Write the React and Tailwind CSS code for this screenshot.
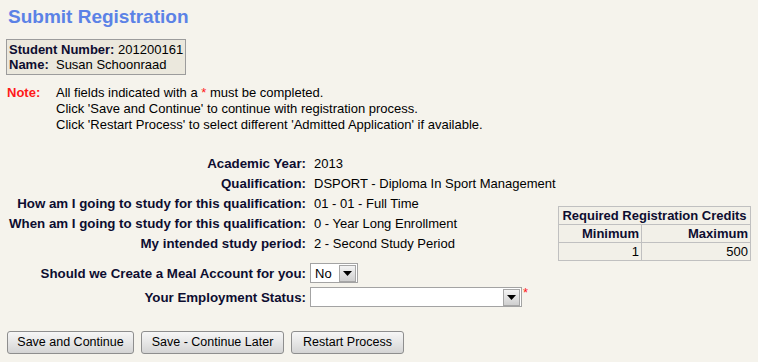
import React from "react";

const Arrow = ({ className = "" }) => (
  <div
    className={`flex items-center justify-center border border-[#a6a6a6] bg-gradient-to-b from-[#f4f4f4] to-[#cfcfcf] ${className}`}
  >
    <svg width="9" height="5" viewBox="0 0 9 5">
      <path d="M0 0h9L4.5 5z" fill="#000" />
    </svg>
  </div>
);

const Row = ({ label, children }) => (
  <div className="flex h-[20px] items-center">
    <div className="w-[306px] shrink-0 text-right text-[13.3px] font-bold text-[#0d0d30] whitespace-nowrap">{label}</div>
    <div className="pl-[8px] text-black whitespace-nowrap">{children}</div>
  </div>
);

const Button = ({ children, width }) => (
  <button
    className={`h-[23px] ${width} rounded-[3px] border border-[#8e8e8e] bg-gradient-to-b from-[#f6f6f6] via-[#e6e6e6] to-[#d4d4d4] text-[12.5px] text-black`}
  >
    {children}
  </button>
);

export default function App() {
  return (
    <div className="min-h-[362px] w-[758px] bg-[#f5f3ec] font-['Liberation_Sans',Arial,sans-serif] text-[13px] leading-[15px] text-[#0d0d30]">
      <div className="px-[8px] pt-[6px]">
        <h1 className="text-[19px] font-bold leading-[22px] text-[#5b82e6]">
          Submit Registration
        </h1>
      </div>

      <div className="ml-[6px] mt-[11px] w-[180px] border border-[#9c9c9c] bg-[#ebe8dd] px-[2px] py-[2px] whitespace-nowrap">
        <div>
          <span className="font-bold">Student Number:</span>{" "}
          <span className="text-black">201200161</span>
        </div>
        <div>
          <span className="font-bold">Name:</span>
          <span className="text-black">&nbsp; Susan Schoonraad</span>
        </div>
      </div>

      <div className="mt-[10px] flex px-[7px] leading-[16px]">
        <div className="w-[49px] shrink-0 font-bold text-[#ff1a1a]">Note:</div>
        <div className="text-black">
          <div>
            All fields indicated with a <span className="text-[#ff1a1a]">*</span> must be
            completed.
          </div>
          <div>Click 'Save and Continue' to continue with registration process.</div>
          <div>
            Click 'Restart Process' to select different 'Admitted Application' if available.
          </div>
        </div>
      </div>

      <div className="mt-[20px] flex">
        <div className="w-[554px] shrink-0">
          <Row label="Academic Year:">2013</Row>
          <Row label="Qualification:">DSPORT - Diploma In Sport Management</Row>
          <Row label="How am I going to study for this qualification:">01 - 01 - Full Time</Row>
          <Row label="When am I going to study for this qualification:">
            0 - Year Long Enrollment
          </Row>
          <Row label="My intended study period:">2 - Second Study Period</Row>

          <div className="mt-[10px] flex h-[20px] items-center">
            <div className="w-[306px] shrink-0 text-right text-[13.3px] font-bold">
              Should we Create a Meal Account for you:
            </div>
            <div className="ml-[4px] flex h-[20px] w-[48px] items-center justify-between border border-[#a3a3a3] bg-white pl-[4px] pr-[1px] text-black">
              <span>No</span>
              <Arrow className="h-[17px] w-[17px]" />
            </div>
          </div>

          <div className="mt-[4px] flex h-[20px] items-center">
            <div className="w-[306px] shrink-0 text-right text-[13.3px] font-bold">Your Employment Status:</div>
            <div className="ml-[4px] flex h-[20px] w-[212px] items-center justify-end border border-[#a3a3a3] bg-white pr-[1px]">
              <Arrow className="h-[17px] w-[17px]" />
            </div>
            <span className="ml-[1px] self-start text-[#ff1a1a] leading-[12px]">*</span>
          </div>
        </div>

        <div className="ml-[4px] mt-[53px]">
          <table className="w-[193px] border-collapse border border-[#a8a8a8] bg-[#f2f0e8] text-[13px] leading-[16px]">
            <tbody>
              <tr>
                <th colSpan={2} className="h-[18px] border border-[#c0c0c0] px-[2px] text-center font-bold whitespace-nowrap">
                  Required Registration Credits
                </th>
              </tr>
              <tr>
                <th className="h-[18px] w-[83px] border border-[#c0c0c0] px-[2px] text-right font-bold">
                  Minimum
                </th>
                <th className="h-[18px] border border-[#c0c0c0] px-[2px] text-right font-bold">
                  Maximum
                </th>
              </tr>
              <tr>
                <td className="h-[18px] border border-[#c0c0c0] px-[2px] text-right text-black">1</td>
                <td className="h-[18px] border border-[#c0c0c0] px-[2px] text-right text-black">500</td>
              </tr>
            </tbody>
          </table>
        </div>
      </div>

      <div className="mt-[24px] flex gap-[7px] px-[7px] pb-[10px]">
        <Button width="w-[127px]">Save and Continue</Button>
        <Button width="w-[143px]">Save - Continue Later</Button>
        <Button width="w-[113px]">Restart Process</Button>
      </div>
    </div>
  );
}
